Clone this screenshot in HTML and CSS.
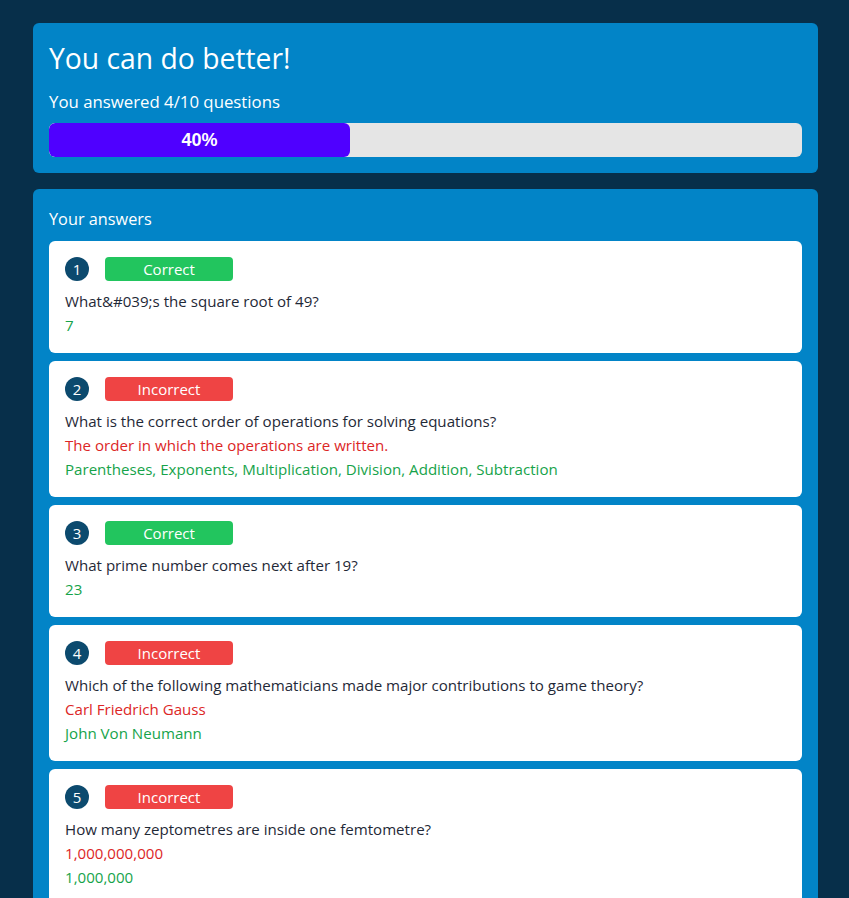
FILE: index.html
```html
<!DOCTYPE html>
<html lang="en">
<head>
<meta charset="utf-8">
<title>Results</title>
<link rel="stylesheet" href="styles.css">
</head>
<body>
<main class="page">
  <section class="panel summary">
    <h1 class="title">You can do better!</h1>
    <p class="subtitle">You answered 4/10 questions</p>
    <div class="progress">
      <div class="progress-fill" style="width: 40%">40%</div>
    </div>
  </section>

  <section class="panel answers">
    <h2 class="answers-title">Your answers</h2>
    <div class="list">
      <article class="item">
        <div class="item-head"><span class="num">1</span><span class="badge ok">Correct</span></div>
        <p class="question">What&amp;#039;s the square root of 49?</p>
        <p class="right">7</p>
      </article>
      <article class="item">
        <div class="item-head"><span class="num">2</span><span class="badge bad">Incorrect</span></div>
        <p class="question">What is the correct order of operations for solving equations?</p>
        <p class="wrong">The order in which the operations are written.</p>
        <p class="right">Parentheses, Exponents, Multiplication, Division, Addition, Subtraction</p>
      </article>
      <article class="item">
        <div class="item-head"><span class="num">3</span><span class="badge ok">Correct</span></div>
        <p class="question">What prime number comes next after 19?</p>
        <p class="right">23</p>
      </article>
      <article class="item">
        <div class="item-head"><span class="num">4</span><span class="badge bad">Incorrect</span></div>
        <p class="question">Which of the following mathematicians made major contributions to game theory?</p>
        <p class="wrong">Carl Friedrich Gauss</p>
        <p class="right">John Von Neumann</p>
      </article>
      <article class="item">
        <div class="item-head"><span class="num">5</span><span class="badge bad">Incorrect</span></div>
        <p class="question">How many zeptometres are inside one femtometre?</p>
        <p class="wrong">1,000,000,000</p>
        <p class="right">1,000,000</p>
      </article>
    </div>
  </section>
</main>
</body>
</html>
```

FILE: styles.css
```css
* { box-sizing: border-box; }
html, body { margin: 0; padding: 0; }
body {
  background: #072f4a;
  font-family: "Open Sans", "Noto Sans", sans-serif;
  color: #1f2937;
}
.page {
  width: 785px;
  margin: 23px 0 23px 33px;
  display: flex;
  flex-direction: column;
  gap: 16px;
}
.panel {
  background: #0284c7;
  border-radius: 6px;
  padding: 16px;
  color: #fff;
}
.title {
  margin: 0;
  font-weight: 400;
  font-size: 28.3px;
  line-height: 38px;
}
.subtitle {
  margin: 14px 0 10px;
  font-size: 16.8px;
  line-height: 22px;
}
.progress {
  height: 34px;
  background: #e5e5e5;
  border-radius: 6px;
  overflow: hidden;
}
.progress-fill {
  height: 100%;
  background: #4f00ff;
  border-radius: 6px;
  color: #fff;
  font-family: "Liberation Sans", Arial, sans-serif;
  font-weight: 700;
  font-size: 18px;
  display: flex;
  align-items: center;
  justify-content: center;
}
.answers { padding-top: 18px; }
.answers-title {
  margin: 0 0 10px;
  font-weight: 400;
  font-size: 16.3px;
  line-height: 24px;
}
.list {
  display: flex;
  flex-direction: column;
  gap: 8px;
}
.item {
  background: #fff;
  border-radius: 6px;
  padding: 16px;
  color: #1f2937;
}
.item-head {
  display: flex;
  align-items: center;
  gap: 16px;
  margin-bottom: 8px;
}
.num {
  width: 24px;
  height: 24px;
  border-radius: 50%;
  background: #0c4a6e;
  color: #fff;
  font-size: 15px;
  display: flex;
  align-items: center;
  justify-content: center;
}
.badge {
  width: 128px;
  height: 24px;
  border-radius: 4px;
  color: #fff;
  font-size: 15px;
  display: flex;
  align-items: center;
  justify-content: center;
}
.badge.ok { background: #22c55e; }
.badge.bad { background: #ef4444; }
.item p {
  margin: 0;
  font-size: 15.1px;
  line-height: 24px;
}
.question { color: #1f2937; }
.wrong { color: #dc2626; }
.right { color: #16a34a; }
```
